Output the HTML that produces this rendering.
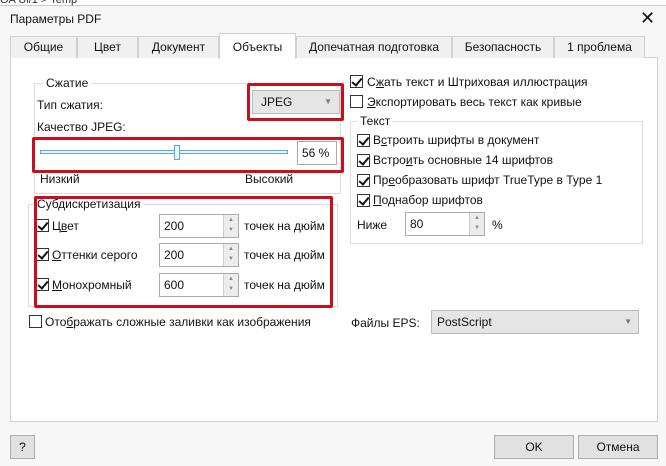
<!DOCTYPE html>
<html><head><meta charset="utf-8"><style>
*{box-sizing:border-box;margin:0;padding:0}
body{width:666px;height:466px;overflow:hidden;background:#f7f7f7;font-family:"Liberation Sans","DejaVu Sans",sans-serif;font-size:12px;color:#111;position:relative}
.a{position:absolute;white-space:nowrap}
.tab{position:absolute;top:36px;height:22px;border:1px solid #d0d0d0;border-bottom:none;background:#f0f0f0;text-align:center;line-height:20px;font-size:12px;white-space:nowrap}
.panel{position:absolute;left:10px;top:57px;width:648px;height:365px;background:#fff;border:1px solid #d0d0d0}
.grp{position:absolute;border:1px solid #dcdcdc}
.lg{position:absolute;background:#fff;padding:0 3px;top:-8px;left:8px}
.cb{position:absolute;width:13px;height:13px;border:1px solid #333;background:#fff}
.cb.c::after{content:"";position:absolute;left:3px;top:0px;width:4px;height:8px;border:solid #111;border-width:0 2px 2px 0;transform:rotate(40deg)}
.inp{position:absolute;height:24px;border:1px solid #aaa;background:#fff;padding-left:4px;line-height:22px}
.spin{position:absolute;right:0;top:0;width:15px;height:22px;background:#ececec;border-left:1px solid #ccc;font-size:6px;color:#888;text-align:center;line-height:10px}
.red{position:absolute;border:3px solid #c8101c;border-radius:2px}
.btn{position:absolute;height:24px;border:1px solid #adadad;background:#e1e1e1;text-align:center;line-height:22px}
u{text-decoration:underline}
</style></head><body>
<div class="a" style="left:0;top:0;width:666px;height:6px;border-bottom:1px solid #ccc;background:#fff"></div>
<div class="a" style="left:0;top:-6px;font-size:11px;color:#333">OA Ul/1 &gt; Temp</div>
<div class="a" style="left:10px;top:12px;font-size:12px">Параметры PDF</div>
<div class="a" style="left:640px;top:8px;font-size:18px">✕</div>

<div class="panel"></div>
<div class="tab" style="left:10px;width:67px">Общие</div>
<div class="tab" style="left:77px;width:61px">Цвет</div>
<div class="tab" style="left:138px;width:81px">Документ</div>
<div class="tab" style="left:296px;width:156px">Допечатная подготовка</div>
<div class="tab" style="left:452px;width:102px">Безопасность</div>
<div class="tab" style="left:554px;width:91px">1 проблема</div>
<div class="tab" style="left:219px;top:33px;width:77px;height:26px;background:#fff;line-height:26px">Объекты</div>

<div class="grp" style="left:34px;top:83px;width:307px;height:111px"><span class="lg">Сжатие</span></div>
<div class="a" style="left:37px;top:98px">Тип сжатия:</div>
<div class="a" style="left:252px;top:90px;width:88px;height:24px;background:#e5e5e5;border:1px solid #bbb;padding-left:8px;line-height:22px">JPEG<span style="position:absolute;right:7px;top:0;font-size:8px;color:#777">▼</span></div>
<div class="red" style="left:247px;top:83px;width:97px;height:38px"></div>
<div class="a" style="left:37px;top:120px">Качество JPEG:</div>
<div class="a" style="left:40px;top:150px;width:248px;height:4px;border:1px solid #5aa9d0;background:#e8f4fa"></div>
<div class="a" style="left:174px;top:145px;width:6px;height:15px;border:1px solid #5aa9d0;background:#e8f4fa"></div>
<div class="inp" style="left:297px;top:141px;width:40px">56 %</div>
<div class="red" style="left:32px;top:137px;width:312px;height:36px"></div>
<div class="a" style="left:40px;top:172px">Низкий</div>
<div class="a" style="left:245px;top:172px">Высокий</div>

<div class="grp" style="left:28px;top:204px;width:310px;height:103px"><span class="lg" style="left:5px">Субдискретизация</span></div>
<div class="cb c" style="left:36px;top:219px"></div><div class="a" style="left:52px;top:219px">Ц<u>в</u>ет</div>
<div class="inp" style="left:159px;top:214px;width:80px">200<div class="spin">▲<br>▼</div></div>
<div class="a" style="left:244px;top:219px">точек на дюйм</div>
<div class="cb c" style="left:36px;top:248px"></div><div class="a" style="left:52px;top:248px"><u>О</u>ттенки серого</div>
<div class="inp" style="left:159px;top:243px;width:80px">200<div class="spin">▲<br>▼</div></div>
<div class="a" style="left:244px;top:248px">точек на дюйм</div>
<div class="cb c" style="left:36px;top:278px"></div><div class="a" style="left:52px;top:278px"><u>М</u>онохромный</div>
<div class="inp" style="left:159px;top:273px;width:80px">600<div class="spin">▲<br>▼</div></div>
<div class="a" style="left:244px;top:278px">точек на дюйм</div>
<div class="red" style="left:34px;top:196px;width:299px;height:112px"></div>

<div class="cb" style="left:29px;top:315px"></div>
<div class="a" style="left:45px;top:315px">Ото<u>б</u>ражать сложные заливки как изображения</div>

<div class="cb c" style="left:350px;top:75px"></div><div class="a" style="left:367px;top:75px">С<u>ж</u>ать текст и Штриховая иллюстрация</div>
<div class="cb" style="left:350px;top:95px"></div><div class="a" style="left:367px;top:95px"><u>Э</u>кспортировать весь текст как кривые</div>
<div class="grp" style="left:350px;top:121px;width:293px;height:123px"><span class="lg" style="left:6px">Текст</span></div>
<div class="cb c" style="left:357px;top:134px"></div><div class="a" style="left:373px;top:133px">В<u>с</u>троить шрифты в документ</div>
<div class="cb c" style="left:357px;top:154px"></div><div class="a" style="left:373px;top:153px">Встро<u>и</u>ть основные 14 шрифтов</div>
<div class="cb c" style="left:357px;top:174px"></div><div class="a" style="left:373px;top:173px">Пр<u>е</u>образовать шрифт TrueType в Type 1</div>
<div class="cb c" style="left:357px;top:194px"></div><div class="a" style="left:373px;top:193px"><u>П</u>однабор шрифтов</div>
<div class="a" style="left:357px;top:218px">Ниже</div>
<div class="inp" style="left:405px;top:212px;width:80px">80<div class="spin">▲<br>▼</div></div>
<div class="a" style="left:492px;top:218px">%</div>

<div class="a" style="left:351px;top:316px">Файлы EPS:</div>
<div class="a" style="left:431px;top:310px;width:208px;height:24px;background:#e5e5e5;border:1px solid #bbb;padding-left:5px;line-height:22px">PostScript<span style="position:absolute;right:6px;top:0;font-size:8px;color:#777">▼</span></div>

<div class="btn" style="left:10px;top:435px;width:25px">?</div>
<div class="btn" style="left:494px;top:435px;width:80px">OK</div>
<div class="btn" style="left:578px;top:435px;width:80px">Отмена</div>
</body></html>
